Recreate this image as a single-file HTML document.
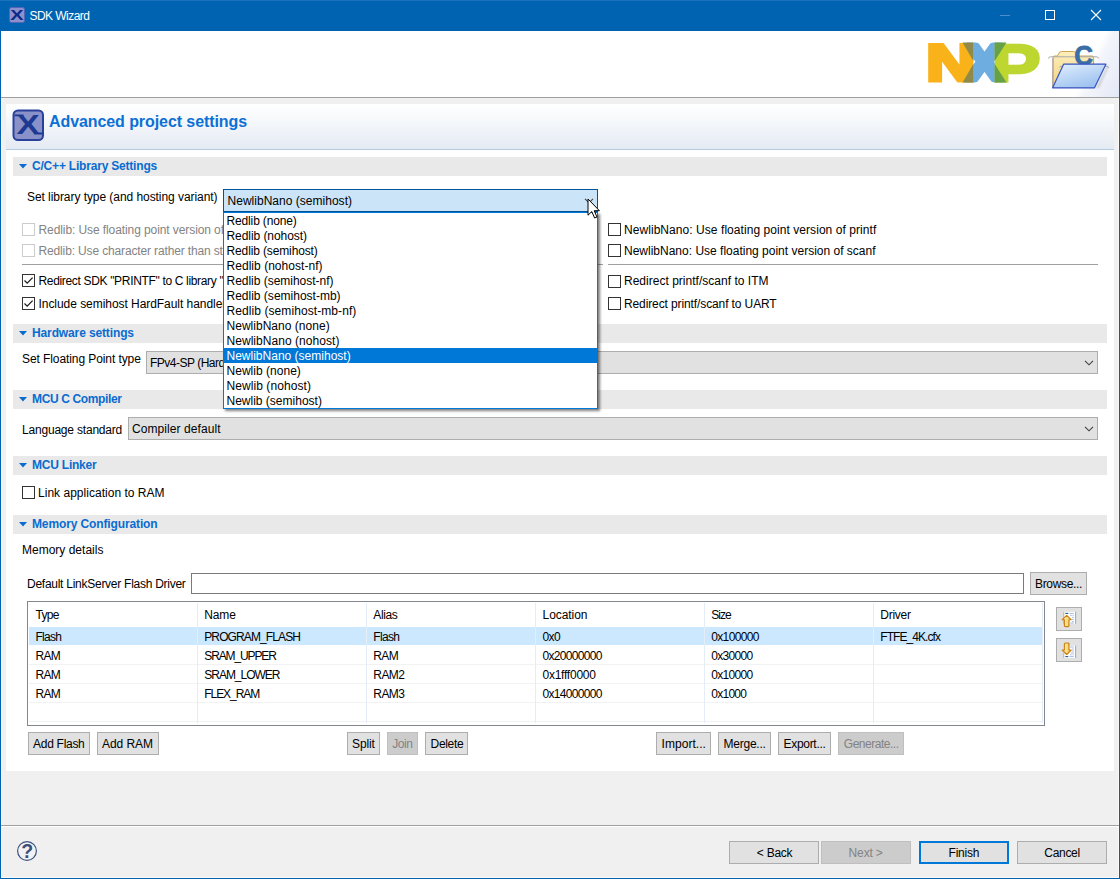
<!DOCTYPE html>
<html lang="en"><head><meta charset="utf-8"><title>SDK Wizard</title>
<style>
html,body{margin:0;padding:0;overflow:hidden;}
body{width:1120px;height:879px;position:relative;overflow:hidden;background:#f0f0f0;font-family:"Liberation Sans", sans-serif;font-size:12px;}
.b{position:absolute;display:block;}
.t{position:absolute;white-space:nowrap;display:block;}
</style></head>
<body>
<div class="b" style="left:0px;top:0px;width:1120px;height:879px;background:#f0f0f0;"></div>
<div class="b" style="left:0px;top:0px;width:1120px;height:31px;background:#0063b1;"></div>
<div class="b" style="left:0px;top:0px;width:1120px;height:1px;background:#1a72bd;"></div>
<div class="b" style="left:0px;top:31px;width:1px;height:848px;background:#0063b1;"></div>
<div class="b" style="left:1119px;top:31px;width:1px;height:848px;background:#0063b1;"></div>
<div class="b" style="left:0px;top:878px;width:1120px;height:1px;background:#0063b1;"></div>
<div class="b" style="left:1px;top:98px;width:1px;height:780px;background:#f9f9f9;"></div>
<div class="b" style="left:1118px;top:98px;width:1px;height:780px;background:#f9f9f9;"></div>
<div class="b" style="left:1px;top:877px;width:1118px;height:1px;background:#f9f9f9;"></div>
<svg class="b" style="left:9px;top:7px" width="16" height="16" viewBox="0 0 16 16">
<rect x="0.5" y="0.5" width="15" height="15" rx="2" fill="#8c90cc" stroke="#5566b8"/>
<text x="0" y="0" font-family="Liberation Sans, sans-serif" font-weight="bold" font-size="14.5" fill="#0c2a88" transform="translate(1.25 13) scale(1.37 1)">X</text>
</svg>
<span class="t" style="left:29.5px;top:9px;color:#fff;font-size:12px;line-height:14px;letter-spacing:-0.544px;">SDK Wizard</span>
<div class="b" style="left:1000px;top:15px;width:10px;height:1px;background:#4d8fca;"></div>
<div class="b" style="left:1045px;top:10px;width:10px;height:10px;border:1px solid #fff;box-sizing:border-box;"></div>
<svg class="b" style="left:1090px;top:9px" width="12" height="12" viewBox="0 0 12 12"><path d="M1 1 L11 11 M11 1 L1 11" stroke="#fff" stroke-width="1.1" fill="none"/></svg>
<div class="b" style="left:1px;top:31px;width:1118px;height:66px;background:#fff;"></div>
<div class="b" style="left:1044px;top:31px;width:75px;height:66px;background:linear-gradient(115.5deg,#ffffff 0%,#ffffff 58%,#f3f5fb 66%,#e3e8f6 100%);"></div>
<div class="b" style="left:1px;top:97px;width:1118px;height:1px;background:#a0a0a0;"></div>
<svg class="b" style="left:926px;top:40px" width="118" height="46" viewBox="926 40 118 46">
<clipPath id="lgc"><rect x="926" y="42.6" width="118" height="39.9"/></clipPath>
<g font-family="Liberation Sans, sans-serif" font-weight="bold" stroke-linejoin="miter" clip-path="url(#lgc)">
<text x="0" y="0" font-size="49.4" stroke-width="6" stroke-miterlimit="1" fill="#6dade0" stroke="#6dade0" transform="translate(965.6 79.5) scale(1.153 1)">X</text>
<text x="0" y="0" font-size="52.3" stroke-width="4" fill="#f9b219" stroke="#f9b219" transform="translate(926.15 80.5) scale(1.301 1)">N</text>
<text x="0" y="0" font-size="63.7" stroke-width="2.5" fill="#bed630" stroke="#bed630" transform="translate(991.2 87.57) scale(1.167 1)">P</text>
</g>
<polygon points="962.6,42.5 973.3,42.5 973.3,61" fill="#8f8a4a"/>
<polygon points="962.6,82.5 973.3,82.5 973.3,64" fill="#8f8a4a"/>
<polygon points="1006.5,42.5 994.7,42.5 994.7,61" fill="#68a046"/>
<polygon points="1006.5,82.5 994.7,82.5 994.7,64" fill="#68a046"/>
</svg>
<svg class="b" style="left:1046px;top:42px" width="70" height="52" viewBox="1046 42 70 52">
<defs>
<linearGradient id="fb" x1="0" y1="0" x2="0" y2="1"><stop offset="0" stop-color="#fdeebc"/><stop offset="1" stop-color="#f3d27e"/></linearGradient>
<filter id="bl" x="-50%" y="-20%" width="200%" height="140%"><feGaussianBlur stdDeviation="1"/></filter>
<linearGradient id="ff" x1="0" y1="0" x2="0.6" y2="1"><stop offset="0" stop-color="#e8f2fd"/><stop offset="0.45" stop-color="#c3dbf7"/><stop offset="1" stop-color="#9dc1f0"/></linearGradient>
</defs>
<path d="M1053 57.5 q0 -1.5 1.5 -1.5 h2.5 q1 0 1.5 -2 q0.6 -2.5 3 -2.5 h12 q2 0 2.6 2 q0.5 2.5 2 2.5 h14 q1.5 0 1.5 1.5 v30 h-41 z" fill="url(#fb)" stroke="#c79a45" stroke-width="0.9"/>
<path d="M1053 58 v29" stroke="#9aa0c8" stroke-width="1"/>
<path d="M1048.5 58.5 q0.3 -1.7 2 -1.7 h46 q1.8 0 2.2 1.7" stroke="#a8a8a8" stroke-width="1" fill="none"/>
<path d="M1059.5 67.5 q0.3 -1.2 1.5 -1.2 h45.5 q1.5 0 2 1.5" stroke="#a8a8a8" stroke-width="1" fill="none"/>
<text x="0" y="0" font-family="Liberation Sans, sans-serif" font-weight="bold" font-size="28.5" fill="#3a6ea5" stroke="#3a6ea5" stroke-width="0.8" transform="translate(1074.3 65.4) scale(0.91 1)">C</text>
<path d="M1096 88 l11.5 -23 l1.5 1 l-10 22 z" fill="#8a8a8a" opacity="0.35" filter="url(#bl)"/>
<path d="M1063.6 64.2 h42.3 l-11.4 23.6 h-41.9 z" fill="url(#ff)" stroke="#3553c4" stroke-width="1.2" stroke-linejoin="round"/>
</svg>
<div class="b" style="left:6px;top:104px;width:1108px;height:667px;background:#fff;"></div>
<div class="b" style="left:6px;top:104px;width:1108px;height:45px;background:linear-gradient(#ffffff 0%,#f5f8fb 40%,#e4eaf3 100%);"></div>
<div class="b" style="left:6px;top:149px;width:1108px;height:1px;background:#b4c8de;"></div>
<svg class="b" style="left:12px;top:109px" width="32" height="32" viewBox="0 0 32 32">
<rect x="1.5" y="1.5" width="29.5" height="29.5" rx="4.5" fill="#8a90c8" stroke="#2a419c" stroke-width="2"/>
<text x="0" y="0" font-family="Liberation Sans, sans-serif" font-weight="bold" font-size="28.5" fill="#1c3a94" transform="translate(4.4 25.2) scale(1.22 1)">X</text>
<path d="M2.5 6.4 h9 M22 24.5 h8.5" stroke="#1c3a94" stroke-width="1.8"/>
</svg>
<span class="t" style="left:49px;top:113px;color:#0c70d4;font-size:16px;line-height:18px;font-weight:bold;letter-spacing:-0.082px;">Advanced project settings</span>
<div class="b" style="left:13px;top:157px;width:1094px;height:19px;background:#e9e9e9;"></div>
<svg class="b" style="left:19px;top:164px" width="8" height="5" viewBox="0 0 8 5"><polygon points="0,0 8,0 4,4.5" fill="#0a6cd0"/></svg>
<span class="t" style="left:32px;top:159px;color:#0a6cd0;font-size:12px;line-height:14px;font-weight:bold;letter-spacing:-0.199px;">C/C++ Library Settings</span>
<div class="b" style="left:13px;top:324px;width:1094px;height:19px;background:#e9e9e9;"></div>
<svg class="b" style="left:19px;top:331px" width="8" height="5" viewBox="0 0 8 5"><polygon points="0,0 8,0 4,4.5" fill="#0a6cd0"/></svg>
<span class="t" style="left:32px;top:326px;color:#0a6cd0;font-size:12px;line-height:14px;font-weight:bold;letter-spacing:-0.126px;">Hardware settings</span>
<div class="b" style="left:13px;top:390px;width:1094px;height:19px;background:#e9e9e9;"></div>
<svg class="b" style="left:19px;top:397px" width="8" height="5" viewBox="0 0 8 5"><polygon points="0,0 8,0 4,4.5" fill="#0a6cd0"/></svg>
<span class="t" style="left:32px;top:392px;color:#0a6cd0;font-size:12px;line-height:14px;font-weight:bold;letter-spacing:-0.369px;">MCU C Compiler</span>
<div class="b" style="left:13px;top:456px;width:1094px;height:19px;background:#e9e9e9;"></div>
<svg class="b" style="left:19px;top:463px" width="8" height="5" viewBox="0 0 8 5"><polygon points="0,0 8,0 4,4.5" fill="#0a6cd0"/></svg>
<span class="t" style="left:32px;top:458px;color:#0a6cd0;font-size:12px;line-height:14px;font-weight:bold;letter-spacing:-0.219px;">MCU Linker</span>
<div class="b" style="left:13px;top:515px;width:1094px;height:19px;background:#e9e9e9;"></div>
<svg class="b" style="left:19px;top:522px" width="8" height="5" viewBox="0 0 8 5"><polygon points="0,0 8,0 4,4.5" fill="#0a6cd0"/></svg>
<span class="t" style="left:32px;top:517px;color:#0a6cd0;font-size:12px;line-height:14px;font-weight:bold;letter-spacing:-0.125px;">Memory Configuration</span>
<span class="t" style="left:27px;top:190px;color:#000;font-size:12px;line-height:14px;letter-spacing:-0.060px;">Set library type (and hosting variant)</span>
<div class="b" style="left:22px;top:223px;width:13px;height:13px;background:#fff;border:1px solid #cccccc;box-sizing:border-box;"></div>
<span class="t" style="left:38.5px;top:223px;color:#838383;font-size:12px;line-height:14px;letter-spacing:-0.090px;">Redlib: Use floating point version of printf</span>
<div class="b" style="left:22px;top:244px;width:13px;height:13px;background:#fff;border:1px solid #cccccc;box-sizing:border-box;"></div>
<span class="t" style="left:38.5px;top:244px;color:#838383;font-size:12px;line-height:14px;letter-spacing:-0.142px;">Redlib: Use character rather than string based printf</span>
<div class="b" style="left:22px;top:264px;width:581px;height:1px;background:#a0a0a0;"></div>
<div class="b" style="left:608px;top:264px;width:490px;height:1px;background:#a0a0a0;"></div>
<div class="b" style="left:22px;top:274px;width:13px;height:13px;background:#fff;border:1px solid #333333;box-sizing:border-box;"><svg width="11" height="11" viewBox="0 0 11 11" style="position:absolute;left:0;top:0"><path d="M1.5 5.5 L4.2 8.2 L9.6 2.6" stroke="#1a1a1a" stroke-width="1.2" fill="none"/></svg></div>
<span class="t" style="left:38.5px;top:274px;color:#000;font-size:12px;line-height:14px;letter-spacing:-0.333px;">Redirect SDK "PRINTF" to C library "printf"</span>
<div class="b" style="left:22px;top:297px;width:13px;height:13px;background:#fff;border:1px solid #333333;box-sizing:border-box;"><svg width="11" height="11" viewBox="0 0 11 11" style="position:absolute;left:0;top:0"><path d="M1.5 5.5 L4.2 8.2 L9.6 2.6" stroke="#1a1a1a" stroke-width="1.2" fill="none"/></svg></div>
<span class="t" style="left:38.5px;top:297px;color:#000;font-size:12px;line-height:14px;letter-spacing:-0.050px;">Include semihost HardFault handler</span>
<div class="b" style="left:608px;top:223px;width:13px;height:13px;background:#fff;border:1px solid #333333;box-sizing:border-box;"></div>
<span class="t" style="left:624px;top:223px;color:#000;font-size:12px;line-height:14px;letter-spacing:0.059px;">NewlibNano: Use floating point version of printf</span>
<div class="b" style="left:608px;top:244px;width:13px;height:13px;background:#fff;border:1px solid #333333;box-sizing:border-box;"></div>
<span class="t" style="left:624px;top:244px;color:#000;font-size:12px;line-height:14px;letter-spacing:0.001px;">NewlibNano: Use floating point version of scanf</span>
<div class="b" style="left:608px;top:275px;width:13px;height:13px;background:#fff;border:1px solid #333333;box-sizing:border-box;"></div>
<span class="t" style="left:624px;top:274px;color:#000;font-size:12px;line-height:14px;letter-spacing:0.016px;">Redirect printf/scanf to ITM</span>
<div class="b" style="left:608px;top:297px;width:13px;height:13px;background:#fff;border:1px solid #333333;box-sizing:border-box;"></div>
<span class="t" style="left:624px;top:297px;color:#000;font-size:12px;line-height:14px;letter-spacing:-0.112px;">Redirect printf/scanf to UART</span>
<span class="t" style="left:22px;top:352px;color:#000;font-size:12px;line-height:14px;letter-spacing:-0.085px;">Set Floating Point type</span>
<div class="b" style="left:146px;top:351px;width:952px;height:23px;background:#e1e1e1;border:1px solid #adadad;box-sizing:border-box;"></div>
<span class="t" style="left:150px;top:356px;color:#000;font-size:12px;line-height:14px;letter-spacing:-0.497px;">FPv4-SP (Hard ABI)</span>
<svg class="b" style="left:1084px;top:360px" width="10" height="6" viewBox="0 0 10 6"><path d="M1 0.8 L5 4.8 L9 0.8" stroke="#404040" stroke-width="1.1" fill="none"/></svg>
<span class="t" style="left:22px;top:423px;color:#000;font-size:12px;line-height:14px;letter-spacing:-0.196px;">Language standard</span>
<div class="b" style="left:128px;top:417px;width:970px;height:23px;background:#e1e1e1;border:1px solid #adadad;box-sizing:border-box;"></div>
<span class="t" style="left:132px;top:422px;color:#000;font-size:12px;line-height:14px;letter-spacing:0.083px;">Compiler default</span>
<svg class="b" style="left:1084px;top:426px" width="10" height="6" viewBox="0 0 10 6"><path d="M1 0.8 L5 4.8 L9 0.8" stroke="#404040" stroke-width="1.1" fill="none"/></svg>
<div class="b" style="left:22px;top:486px;width:13px;height:13px;background:#fff;border:1px solid #333333;box-sizing:border-box;"></div>
<span class="t" style="left:38px;top:486px;color:#000;font-size:12px;line-height:14px;letter-spacing:0.023px;">Link application to RAM</span>
<span class="t" style="left:22px;top:543px;color:#000;font-size:12px;line-height:14px;letter-spacing:0.003px;">Memory details</span>
<span class="t" style="left:27px;top:577px;color:#000;font-size:12px;line-height:14px;letter-spacing:-0.262px;">Default LinkServer Flash Driver</span>
<div class="b" style="left:191px;top:573px;width:833px;height:21px;background:#fff;border:1px solid #7a7a7a;box-sizing:border-box;"></div>
<div class="b" style="left:1030px;top:572px;width:57px;height:23px;background:#e1e1e1;border:1px solid #adadad;box-sizing:border-box;"></div>
<span class="t" style="left:1035px;top:577px;color:#000;font-size:12px;line-height:14px;letter-spacing:-0.335px;">Browse...</span>
<div class="b" style="left:27px;top:601px;width:1018px;height:125px;background:#fff;border:1px solid #828790;box-sizing:border-box;"></div>
<div class="b" style="left:29px;top:627px;width:1014px;height:18px;background:#cce8ff;"></div>
<div class="b" style="left:29px;top:664px;width:1014px;height:1px;background:#f2f2f2;"></div>
<div class="b" style="left:29px;top:683px;width:1014px;height:1px;background:#f2f2f2;"></div>
<div class="b" style="left:29px;top:702px;width:1014px;height:1px;background:#f2f2f2;"></div>
<div class="b" style="left:29px;top:721px;width:1014px;height:1px;background:#f2f2f2;"></div>
<div class="b" style="left:197px;top:603px;width:1px;height:120px;background:#e3ecf7;"></div>
<div class="b" style="left:366px;top:603px;width:1px;height:120px;background:#e3ecf7;"></div>
<div class="b" style="left:535px;top:603px;width:1px;height:120px;background:#e3ecf7;"></div>
<div class="b" style="left:704px;top:603px;width:1px;height:120px;background:#e3ecf7;"></div>
<div class="b" style="left:873px;top:603px;width:1px;height:120px;background:#e3ecf7;"></div>
<div class="b" style="left:1042px;top:603px;width:1px;height:120px;background:#e3ecf7;"></div>
<span class="t" style="left:35.5px;top:608px;color:#000;font-size:12px;line-height:14px;letter-spacing:-0.704px;">Type</span>
<span class="t" style="left:204.25px;top:608px;color:#000;font-size:12px;line-height:14px;letter-spacing:-0.129px;">Name</span>
<span class="t" style="left:373.25px;top:608px;color:#000;font-size:12px;line-height:14px;letter-spacing:-0.363px;">Alias</span>
<span class="t" style="left:542.5px;top:608px;color:#000;font-size:12px;line-height:14px;letter-spacing:-0.047px;">Location</span>
<span class="t" style="left:711.25px;top:608px;color:#000;font-size:12px;line-height:14px;letter-spacing:-0.961px;">Size</span>
<span class="t" style="left:880.25px;top:608px;color:#000;font-size:12px;line-height:14px;letter-spacing:-0.267px;">Driver</span>
<span class="t" style="left:35.5px;top:630px;color:#000;font-size:12px;line-height:14px;letter-spacing:-0.709px;">Flash</span>
<span class="t" style="left:204.25px;top:630px;color:#000;font-size:12px;line-height:14px;letter-spacing:-0.889px;">PROGRAM_FLASH</span>
<span class="t" style="left:373.25px;top:630px;color:#000;font-size:12px;line-height:14px;letter-spacing:-0.669px;">Flash</span>
<span class="t" style="left:542.5px;top:630px;color:#000;font-size:12px;line-height:14px;letter-spacing:-0.620px;">0x0</span>
<span class="t" style="left:711.25px;top:630px;color:#000;font-size:12px;line-height:14px;letter-spacing:-0.652px;">0x100000</span>
<span class="t" style="left:880.25px;top:630px;color:#000;font-size:12px;line-height:14px;letter-spacing:-0.929px;">FTFE_4K.cfx</span>
<span class="t" style="left:35.5px;top:649px;color:#000;font-size:12px;line-height:14px;letter-spacing:-0.724px;">RAM</span>
<span class="t" style="left:204.25px;top:649px;color:#000;font-size:12px;line-height:14px;letter-spacing:-1.119px;">SRAM_UPPER</span>
<span class="t" style="left:373.25px;top:649px;color:#000;font-size:12px;line-height:14px;letter-spacing:-0.557px;">RAM</span>
<span class="t" style="left:542.5px;top:649px;color:#000;font-size:12px;line-height:14px;letter-spacing:-0.688px;">0x20000000</span>
<span class="t" style="left:711.25px;top:649px;color:#000;font-size:12px;line-height:14px;letter-spacing:-0.692px;">0x30000</span>
<span class="t" style="left:35.5px;top:668px;color:#000;font-size:12px;line-height:14px;letter-spacing:-0.724px;">RAM</span>
<span class="t" style="left:204.25px;top:668px;color:#000;font-size:12px;line-height:14px;letter-spacing:-1.016px;">SRAM_LOWER</span>
<span class="t" style="left:373.25px;top:668px;color:#000;font-size:12px;line-height:14px;letter-spacing:-0.536px;">RAM2</span>
<span class="t" style="left:542.5px;top:668px;color:#000;font-size:12px;line-height:14px;letter-spacing:-0.242px;">0x1fff0000</span>
<span class="t" style="left:711.25px;top:668px;color:#000;font-size:12px;line-height:14px;letter-spacing:-0.692px;">0x10000</span>
<span class="t" style="left:35.5px;top:687px;color:#000;font-size:12px;line-height:14px;letter-spacing:-0.724px;">RAM</span>
<span class="t" style="left:204.25px;top:687px;color:#000;font-size:12px;line-height:14px;letter-spacing:-1.045px;">FLEX_RAM</span>
<span class="t" style="left:373.25px;top:687px;color:#000;font-size:12px;line-height:14px;letter-spacing:-0.536px;">RAM3</span>
<span class="t" style="left:542.5px;top:687px;color:#000;font-size:12px;line-height:14px;letter-spacing:-0.688px;">0x14000000</span>
<span class="t" style="left:711.25px;top:687px;color:#000;font-size:12px;line-height:14px;letter-spacing:-0.729px;">0x1000</span>
<svg width="0" height="0" style="position:absolute"><defs>
<linearGradient id="ag" x1="0" y1="0" x2="1" y2="0"><stop offset="0" stop-color="#fff6d8"/><stop offset="0.55" stop-color="#fbdc7c"/><stop offset="1" stop-color="#f3b93c"/></linearGradient>
</defs></svg>
<div class="b" style="left:1056px;top:607px;width:26px;height:24px;background:#e1e1e1;border:1px solid #adadad;box-sizing:border-box;"></div>
<svg class="b" style="left:1061px;top:611px" width="16" height="17" viewBox="0 0 16 17">
<rect x="3" y="0.8" width="11.5" height="12" fill="#fff"/>
<path d="M2.8 0.8 v12" stroke="#b4b08a" stroke-width="0.9"/><path d="M14.6 0.8 v12" stroke="#8c9cc8" stroke-width="0.9"/>
<path d="M4.3 2.4 h3" stroke="#1e5aa8" stroke-width="1.1"/>
<path d="M8.5 2.4 h4.3 M9.2 4.4 h1.6 M11.6 4.4 h1.2 M11 6.4 h1.8 M11 8.4 h1.8 M11 10.4 h1.8 M9.2 12 h3.6" stroke="#9db4dc" stroke-width="0.9"/>
<path d="M5.7 4.3 L10.2 8.7 H8 V14.6 Q8 15.6 7 15.6 H4.4 Q3.4 15.6 3.4 14.6 V8.7 H1.2 Z" fill="url(#ag)" stroke="#c98218" stroke-width="1.15" stroke-linejoin="round"/>
</svg>
<div class="b" style="left:1056px;top:638px;width:26px;height:24px;background:#e1e1e1;border:1px solid #adadad;box-sizing:border-box;"></div>
<svg class="b" style="left:1061px;top:642px" width="16" height="17" viewBox="0 0 16 17">
<rect x="3" y="3.7" width="11.5" height="12.3" fill="#fff"/>
<path d="M2.8 11 v5" stroke="#b4b08a" stroke-width="0.9"/><path d="M14.6 3.7 v12.3" stroke="#8c9cc8" stroke-width="0.9"/>
<path d="M4.3 14.6 h3" stroke="#1e5aa8" stroke-width="1.1"/>
<path d="M9 5 h3.8 M11 7 h1.8 M11 9 h1.8 M10 11 h2.8 M9 12.8 h1.6 M11.6 12.8 h1.2 M8.5 14.6 h4.3" stroke="#9db4dc" stroke-width="0.9"/>
<path d="M5.7 12.5 L10.2 8 H8 V2 Q8 1 7 1 H4.4 Q3.4 1 3.4 2 V8 H1.2 Z" fill="url(#ag)" stroke="#c98218" stroke-width="1.15" stroke-linejoin="round"/>
</svg>
<div class="b" style="left:28px;top:732px;width:62px;height:23px;background:#e1e1e1;border:1px solid #adadad;box-sizing:border-box;"></div>
<span class="t" style="left:33.1px;top:737px;color:#000;font-size:12px;line-height:14px;letter-spacing:-0.292px;">Add Flash</span>
<div class="b" style="left:97px;top:732px;width:62px;height:23px;background:#e1e1e1;border:1px solid #adadad;box-sizing:border-box;"></div>
<span class="t" style="left:102.1px;top:737px;color:#000;font-size:12px;line-height:14px;letter-spacing:-0.094px;">Add RAM</span>
<div class="b" style="left:347px;top:732px;width:33px;height:23px;background:#e1e1e1;border:1px solid #adadad;box-sizing:border-box;"></div>
<span class="t" style="left:352.1px;top:737px;color:#000;font-size:12px;line-height:14px;letter-spacing:-0.129px;">Split</span>
<div class="b" style="left:387px;top:732px;width:31px;height:23px;background:#cccccc;border:1px solid #bfbfbf;box-sizing:border-box;"></div>
<span class="t" style="left:392.25px;top:737px;color:#838383;font-size:12px;line-height:14px;letter-spacing:-0.454px;">Join</span>
<div class="b" style="left:425px;top:732px;width:43px;height:23px;background:#e1e1e1;border:1px solid #adadad;box-sizing:border-box;"></div>
<span class="t" style="left:430.6px;top:737px;color:#000;font-size:12px;line-height:14px;letter-spacing:-0.331px;">Delete</span>
<div class="b" style="left:656px;top:732px;width:55px;height:23px;background:#e1e1e1;border:1px solid #adadad;box-sizing:border-box;"></div>
<span class="t" style="left:661.6px;top:737px;color:#000;font-size:12px;line-height:14px;letter-spacing:0.032px;">Import...</span>
<div class="b" style="left:718px;top:732px;width:53px;height:23px;background:#e1e1e1;border:1px solid #adadad;box-sizing:border-box;"></div>
<span class="t" style="left:723.6px;top:737px;color:#000;font-size:12px;line-height:14px;letter-spacing:-0.252px;">Merge...</span>
<div class="b" style="left:778px;top:732px;width:53px;height:23px;background:#e1e1e1;border:1px solid #adadad;box-sizing:border-box;"></div>
<span class="t" style="left:783.5px;top:737px;color:#000;font-size:12px;line-height:14px;letter-spacing:-0.299px;">Export...</span>
<div class="b" style="left:838px;top:732px;width:66px;height:23px;background:#cccccc;border:1px solid #bfbfbf;box-sizing:border-box;"></div>
<span class="t" style="left:843.8px;top:737px;color:#838383;font-size:12px;line-height:14px;letter-spacing:-0.477px;">Generate...</span>
<div class="b" style="left:1px;top:825px;width:1118px;height:1px;background:#a0a0a0;"></div>
<div class="b" style="left:1px;top:826px;width:1118px;height:1px;background:#ffffff;"></div>
<svg class="b" style="left:16px;top:840px" width="22" height="22" viewBox="0 0 22 22">
<circle cx="11" cy="11" r="9.4" fill="#f2f2f5" stroke="#3d5280" stroke-width="1.2"/>
<text x="11.1" y="17.7" text-anchor="middle" font-family="Liberation Sans, sans-serif" font-weight="bold" font-size="19.5" fill="#3a5078">?</text></svg>
<div class="b" style="left:729px;top:841px;width:90px;height:23px;background:#e1e1e1;border:1px solid #adadad;box-sizing:border-box;"></div>
<span class="t" style="left:756.8px;top:846px;color:#000;font-size:12px;line-height:14px;letter-spacing:-0.255px;">&lt; Back</span>
<div class="b" style="left:821px;top:841px;width:90px;height:23px;background:#cccccc;border:1px solid #bfbfbf;box-sizing:border-box;"></div>
<span class="t" style="left:848.6px;top:846px;color:#838383;font-size:12px;line-height:14px;letter-spacing:-0.153px;">Next &gt;</span>
<div class="b" style="left:919px;top:841px;width:90px;height:23px;background:#e1e1e1;border:2px solid #0078d7;box-sizing:border-box;"></div>
<span class="t" style="left:948.6px;top:846px;color:#000;font-size:12px;line-height:14px;letter-spacing:-0.236px;">Finish</span>
<div class="b" style="left:1017px;top:841px;width:90px;height:23px;background:#e1e1e1;border:1px solid #adadad;box-sizing:border-box;"></div>
<span class="t" style="left:1044.3px;top:846px;color:#000;font-size:12px;line-height:14px;letter-spacing:-0.310px;">Cancel</span>
<div class="b" style="left:223px;top:189px;width:375px;height:23px;background:#cce4f7;border:1px solid #005499;box-sizing:border-box;z-index:5;"></div>
<span class="t" style="left:227.5px;top:194px;color:#000;font-size:12px;line-height:14px;letter-spacing:0.022px;z-index:6;">NewlibNano (semihost)</span>
<svg class="b" style="left:584px;top:198px;z-index:6" width="10" height="6" viewBox="0 0 10 6"><path d="M1 0.8 L5 4.8 L9 0.8" stroke="#404040" stroke-width="1.1" fill="none"/></svg>
<div class="b" style="left:223px;top:212px;width:375px;height:197px;background:#fff;border:1px solid #0078d7;box-sizing:border-box;z-index:5;box-shadow:2px 2px 2.5px rgba(0,0,0,0.5);"></div>
<span class="t" style="left:226.5px;top:213.5px;color:#000;font-size:12px;line-height:14px;letter-spacing:-0.142px;z-index:7;">Redlib (none)</span>
<span class="t" style="left:226.5px;top:228.5px;color:#000;font-size:12px;line-height:14px;letter-spacing:-0.065px;z-index:7;">Redlib (nohost)</span>
<span class="t" style="left:226.5px;top:243.5px;color:#000;font-size:12px;line-height:14px;letter-spacing:-0.128px;z-index:7;">Redlib (semihost)</span>
<span class="t" style="left:226.5px;top:258.5px;color:#000;font-size:12px;line-height:14px;letter-spacing:0.039px;z-index:7;">Redlib (nohost-nf)</span>
<span class="t" style="left:226.5px;top:273.5px;color:#000;font-size:12px;line-height:14px;letter-spacing:-0.019px;z-index:7;">Redlib (semihost-nf)</span>
<span class="t" style="left:226.5px;top:288.5px;color:#000;font-size:12px;line-height:14px;letter-spacing:0.003px;z-index:7;">Redlib (semihost-mb)</span>
<span class="t" style="left:226.5px;top:303.5px;color:#000;font-size:12px;line-height:14px;letter-spacing:0.081px;z-index:7;">Redlib (semihost-mb-nf)</span>
<span class="t" style="left:226.5px;top:318.5px;color:#000;font-size:12px;line-height:14px;letter-spacing:0.027px;z-index:7;">NewlibNano (none)</span>
<span class="t" style="left:226.5px;top:333.5px;color:#000;font-size:12px;line-height:14px;letter-spacing:0.049px;z-index:7;">NewlibNano (nohost)</span>
<div class="b" style="left:224px;top:348px;width:373px;height:15px;background:#0078d7;z-index:6;"></div>
<span class="t" style="left:226.5px;top:348.5px;color:#fff;font-size:12px;line-height:14px;letter-spacing:0.007px;z-index:7;">NewlibNano (semihost)</span>
<span class="t" style="left:226.5px;top:363.5px;color:#000;font-size:12px;line-height:14px;letter-spacing:0.027px;z-index:7;">Newlib (none)</span>
<span class="t" style="left:226.5px;top:378.5px;color:#000;font-size:12px;line-height:14px;letter-spacing:0.075px;z-index:7;">Newlib (nohost)</span>
<span class="t" style="left:226.5px;top:393.5px;color:#000;font-size:12px;line-height:14px;letter-spacing:0.002px;z-index:7;">Newlib (semihost)</span>
<svg class="b" style="left:587px;top:198px;z-index:9" width="14" height="22" viewBox="0 0 14 22">
<path d="M1 1 L1 17.2 L4.8 13.6 L7.6 20 L10 19 L7.2 12.7 L12.4 12.7 Z" fill="#fff" stroke="#000" stroke-width="1" stroke-linejoin="miter"/></svg>
</body></html>
